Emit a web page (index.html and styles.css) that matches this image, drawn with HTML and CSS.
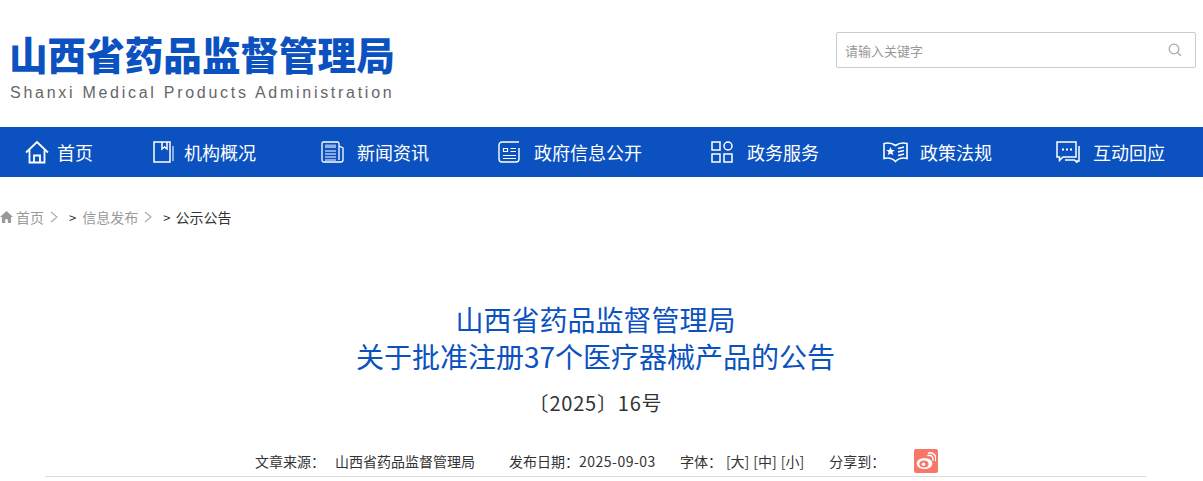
FILE: index.html
```html
<!DOCTYPE html>
<html lang="zh-CN">
<head>
  <meta charset="UTF-8" />
  <title>山西省药品监督管理局</title>
  <link rel="stylesheet" href="styles.css">
</head>
<body>

  <header class="top">
    <div class="logo">
      <div class="logo-cn">山西省药品监督管理局</div>
      <div class="logo-en">Shanxi Medical Products Administration</div>
    </div>
    <div class="search">
      <span class="search-text">请输入关键字</span>
      <svg class="search-icon" width="14" height="14" viewBox="0 0 14 14" fill="none" stroke="#aaa" stroke-width="1.3">
        <circle cx="6" cy="6" r="4.800"/>
        <path d="M9.500 9.500L13 13"/>
      </svg>
    </div>
  </header>

  <nav class="nav">
    <a class="nav-item">
      <svg class="nav-icon" width="24" height="24" viewBox="0 0 24 24" fill="none" stroke="#fff" stroke-width="1.8">
        <path d="M1 12.500L12 2l11 10.500M4.500 10v12.500h15V10M9 22.500v-7h6v7"/>
      </svg>
      <span>首页</span>
    </a>
    <a class="nav-item">
      <svg class="nav-icon" width="21" height="22" viewBox="0 0 21 22" fill="none" stroke="#fff" stroke-width="1.5">
        <path d="M1 1h16v20H1zM9 1v7l2.500-2L14 8V1"/>
        <path d="M20 5v15" stroke-opacity=".7"/>
      </svg>
      <span>机构概况</span>
    </a>
    <a class="nav-item">
      <svg class="nav-icon" width="23" height="22" viewBox="0 0 23 22" fill="none" stroke="#fff" stroke-width="1.3">
        <path d="M18 5V2.500A1.500 1.500 0 0 0 16.500 1h-14A1.500 1.500 0 0 0 1 2.500v17A1.500 1.500 0 0 0 2.500 21H20a2 2 0 0 0 2-2V7l-4-2v14"/>
        <path d="M4 10h11M4 13h11M4 16h11M4 19h11" stroke-width="1.100"/>
        <path d="M4 3.500h11v3.500H4z" fill="#fff" fill-opacity=".55" stroke="none"/>
      </svg>
      <span>新闻资讯</span>
    </a>
    <a class="nav-item">
      <svg class="nav-icon" width="22" height="22" viewBox="0 0 22 22" fill="none" stroke="#fff" stroke-width="1.4">
        <path d="M21 1H4a3 3 0 0 0-3 3v14a3 3 0 0 0 3 3h14a3 3 0 0 0 3-3V7"/>
        <path d="M5.500 7.500h4v3h-4zM12.500 7.500H18M12.500 10.500H18M5 14.500h13M5 17.500h13" stroke-width="1.200"/>
      </svg>
      <span>政府信息公开</span>
    </a>
    <a class="nav-item">
      <svg class="nav-icon" width="22" height="22" viewBox="0 0 22 22" fill="none" stroke="#fff" stroke-width="1.500">
        <path d="M1 1h8v8H1zM13 13h8v8h-8zM1 13h8v8H1z"/>
        <circle cx="17" cy="5" r="4"/>
      </svg>
      <span>政务服务</span>
    </a>
    <a class="nav-item">
      <svg class="nav-icon" width="25" height="22" viewBox="0 0 25 22" fill="none" stroke="#fff" stroke-width="1.600">
        <path d="M12.500 4.500C9 2 5 1.500 1 2.500v15c4-1 8-.5 11.500 3 3.500-3.500 7.500-4 11.500-3v-15c-4-1-8-.5-11.500 2z"/>
        <path d="M7.500 6l1.300 3h3l-2.400 2 .9 3.200-2.800-1.800-2.800 1.800.9-3.200-2.400-2h3z" fill="#fff" stroke="none"/>
        <path d="M15 7.500l6-1.500M15 11l6-1.500M15 14.500l6-1.500"/>
      </svg>
      <span>政策法规</span>
    </a>
    <a class="nav-item">
      <svg class="nav-icon" width="24" height="22" viewBox="0 0 24 22" fill="none" stroke="#fff" stroke-width="1.500">
        <path d="M1 1h19v15H7l-3.500 3.500V16H1z"/>
        <path d="M23 5v15h-2v1.500L18.500 19H9"/>
        <path d="M6 8.500h2M10 8.500h2M14 8.500h2" stroke-width="2"/>
      </svg>
      <span>互动回应</span>
    </a>
  </nav>

  <div class="crumbs">
    <svg class="crumb-home" width="13" height="12" viewBox="0 0 12 11" fill="#999">
      <path d="M6 0L0 5.500h1.800V11h3V7.500h2.400V11h3V5.500H12z"/>
    </svg>
    <span class="crumb-link">首页</span>
    <svg class="crumb-arrow" width="8" height="12" viewBox="0 0 8 12" fill="none" stroke="#aaa" stroke-width="1.100"><path d="M1 1l6 5-6 5"/></svg>
    <span class="crumb-sep">&gt;</span>
    <span class="crumb-link">信息发布</span>
    <svg class="crumb-arrow" width="8" height="12" viewBox="0 0 8 12" fill="none" stroke="#aaa" stroke-width="1.100"><path d="M1 1l6 5-6 5"/></svg>
    <span class="crumb-sep">&gt;</span>
    <span class="crumb-now">公示公告</span>
  </div>

  <main class="article">
    <h1 class="title">山西省药品监督管理局<br>关于批准注册37个医疗器械产品的公告</h1>
    <div class="doc-no">〔2025〕16号</div>
    <div class="meta">
      <span class="meta-source">文章来源&#xFF1A;</span>
      <span class="meta-org">山西省药品监督管理局</span>
      <span class="meta-date">发布日期&#xFF1A;<span class="meta-num">2025-09-03</span></span>
      <span class="meta-size">字体&#xFF1A;</span>
      <span class="meta-font">[大]</span>
      <span class="meta-font">[中]</span>
      <span class="meta-font">[小]</span>
      <span class="meta-share">分享到&#xFF1A;</span>
      <span class="weibo">
        <svg width="20" height="18" viewBox="0 0 20 18">
          <ellipse cx="8.500" cy="11.500" rx="7.800" ry="5.600" fill="#fff"/>
          <ellipse cx="8" cy="12" rx="4.600" ry="3.500" fill="#f8776b"/>
          <circle cx="7.500" cy="12.300" r="1.700" fill="#fff"/>
          <path d="M12 3.500c3-.8 5.500 1.500 4.800 4.500M12.500 1c5-1 8.500 3 7 7.500" fill="none" stroke="#fff" stroke-width="1.500" stroke-linecap="round"/>
        </svg>
      </span>
    </div>
  </main>

</body>
</html>
```

FILE: styles.css
```css
* { box-sizing: border-box; }
body {
  margin: 0;
  font-family: "Noto Sans CJK SC", "Liberation Sans", sans-serif;
  background-color: #fff;
  color: #333;
  overflow: hidden;
}

/* header */
.top {
  display: flex;
  justify-content: space-between;
  height: 127px;
  padding: 32px 7px 0 10px;
}
.logo {
  margin-top: -2px;
}
.logo-cn {
  margin-left: -1px;
  font-size: 38.6px;
  line-height: 46px;
  font-weight: 900;
  color: #0b52c0;
  white-space: nowrap;
}
.logo-en {
  margin-top: 7px;
  font-family: "Liberation Sans", sans-serif;
  font-size: 16px;
  line-height: 20px;
  letter-spacing: 2.72px;
  color: #666;
  white-space: nowrap;
}
.search {
  display: flex;
  align-items: center;
  justify-content: space-between;
  width: 360px;
  height: 36px;
  padding: 0 13px 0 8px;
  border: 1px solid #ccc;
  border-radius: 2px;
}
.search-text {
  font-size: 13px;
  color: #999;
}

/* nav */
.nav {
  display: grid;
  grid-template-columns: 128px 168px 177px 213px 172px 173px auto;
  align-items: center;
  height: 50px;
  padding-left: 25px;
  background-color: #0b52c0;
}
.nav-item {
  display: flex;
  align-items: center;
  gap: 8px;
  font-size: 18px;
  color: #fff;
  white-space: nowrap;
}
.nav-item:nth-child(2) { gap: 10px; }
.nav-item:nth-child(3) { gap: 13px; }
.nav-item:nth-child(4), .nav-item:nth-child(5) { gap: 14px; }
.nav-item:nth-child(6) { gap: 12px; }
.nav-item:nth-child(7) { gap: 13px; }

/* breadcrumb */
.crumbs {
  display: flex;
  align-items: center;
  height: 20px;
  margin-top: 30px;
  font-size: 14px;
  white-space: nowrap;
}
.crumb-link { color: #999; }
.crumb-home { margin-right: 3px; }
.crumb-arrow { margin: 0 11px 0 6px; }
.crumb-sep {
  margin-right: 6px;
  font-size: 13px;
  color: #333;
}
.crumb-now { margin-left: -1px; color: #333; }

/* article head */
.article {
  width: 1101px;
  margin: 0 0 0 45px;
  text-align: center;
}
.title {
  margin: 74px 0 0;
  font-size: 28px;
  line-height: 37px;
  font-weight: 400;
  color: #0b52c0;
}
.doc-no {
  margin-top: 13px;
  font-size: 20px;
  line-height: 30px;
  letter-spacing: 0.8px;
}
.meta {
  display: flex;
  align-items: center;
  height: 33px;
  margin-top: 26px;
  padding: 2px 0 0 210px;
  border-bottom: 1px solid #ddd;
  font-size: 14px;
  white-space: nowrap;
}
.meta-org { margin-left: 10px; }
.meta-date { margin-left: 34px; }
.meta-num { letter-spacing: 0.5px; }
.meta-size { margin-left: 24px; }
.meta-font { margin-left: 4px; }
.meta-share { margin-left: 25px; }
.weibo {
  display: flex;
  align-items: center;
  justify-content: center;
  width: 24px;
  height: 24px;
  margin-left: 29px;
  background-color: #f8776b;
  border-radius: 2px;
}
```
